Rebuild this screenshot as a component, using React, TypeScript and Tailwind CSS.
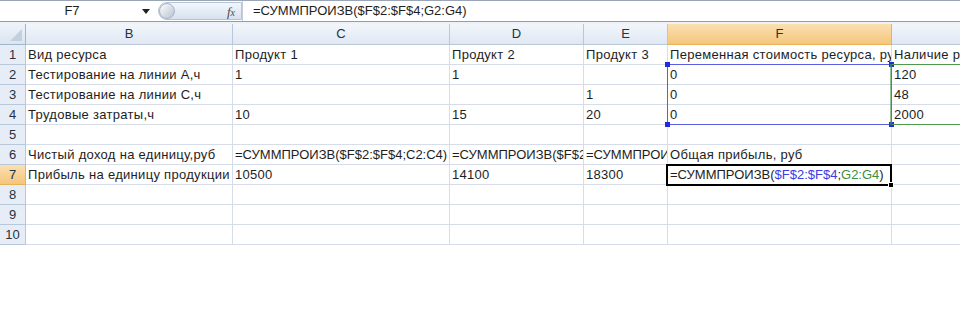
import React from "react";

const template = "26px 207px 217px 134px 84px 224px 200px";
const colNames = ["B", "C", "D", "E", "F", "G"];

type Seg = { t: string; c?: string };
type Cell = string | Seg[] | undefined;

const rows: Cell[][] = [
  ["Вид ресурса", "Продукт 1", "Продукт 2", "Продукт 3", "Переменная стоимость ресурса, руб", "Наличие ресурса"],
  ["Тестирование на линии А,ч", "1", "1", undefined, "0", "120"],
  ["Тестирование на линии С,ч", undefined, undefined, "1", "0", "48"],
  ["Трудовые затраты,ч", "10", "15", "20", "0", "2000"],
  [],
  [
    "Чистый доход на единицу,руб",
    "=СУММПРОИЗВ($F$2:$F$4;C2:C4)",
    "=СУММПРОИЗВ($F$2:$F$4;D2:D4)",
    "=СУММПРОИЗВ($F$2:$F$4;E2:E4)",
    "Общая прибыль, руб",
  ],
  [
    "Прибыль на единицу продукции",
    "10500",
    "14100",
    "18300",
    [
      { t: "=СУММПРОИЗВ(" },
      { t: "$F$2:$F$4", c: "text-[#3c3ce6]" },
      { t: ";" },
      { t: "G2:G4", c: "text-[#3d8f3d]" },
      { t: ")" },
    ],
  ],
  [],
  [],
  [],
];

function renderCell(c: Cell) {
  if (!c) return null;
  if (typeof c === "string") return c;
  return c.map((s, i) => (
    <span key={i} className={s.c}>
      {s.t}
    </span>
  ));
}

function isText(c: Cell) {
  return typeof c === "string" && !c.startsWith("=");
}

const orange = "bg-gradient-to-b from-[#fbe0b1] to-[#f4c67c] border-[#e9b15a]";

export default function App() {
  return (
    <div
      className="w-[960px] h-[322px] bg-white overflow-hidden text-[13px] text-[#1e1e1e]"
      style={{ fontFamily: '"Liberation Sans", Arial, sans-serif' }}
    >
      {/* Formula bar */}
      <div className="h-[22px] flex border-t border-[#9aa5b5] border-b border-b-[#8e9db3] bg-white">
        <div className="w-[158px] flex items-center pr-[8px]">
          <span className="flex-1 text-center pl-[2px]">F7</span>
          <svg width="8" height="5" viewBox="0 0 8 5">
            <path d="M0 0 L8 0 L4 5 Z" fill="#222" />
          </svg>
        </div>
        <div className="w-[84px] my-[1px] rounded-l-full rounded-r-[3px] bg-gradient-to-b from-[#f3f7fc] to-[#d7e1ee] border border-[#b7c4d6] flex items-center justify-between pr-[6px]">
          <div className="w-[16px] h-[16px] rounded-full bg-gradient-to-br from-[#ffffff] to-[#b8c2cf] border border-[#a9b5c5]" />
          <span
            className="italic text-[#4a4a4a] text-[13px] leading-none"
            style={{ fontFamily: '"Liberation Serif", serif' }}
          >
            f<span className="text-[10px]">x</span>
          </span>
        </div>
        <div className="flex-1 flex items-center pl-[10px] border-l border-[#c5cdd9] whitespace-nowrap">
          =СУММПРОИЗВ($F$2:$F$4;G2:G4)
        </div>
      </div>
      <div className="h-[2px] bg-[#eef2f7]" />

      {/* Sheet */}
      <div className="relative">
        <div className="grid" style={{ gridTemplateColumns: template }}>
          {/* header row */}
          <div className="h-[21px] bg-gradient-to-b from-[#eef3fa] to-[#dbe4f0] border-r border-b border-[#9eb6ce] flex items-end justify-end p-[3px]">
            <svg width="12" height="12" viewBox="0 0 12 12">
              <path d="M12 0 L12 12 L0 12 Z" fill="#c3cfdf" />
            </svg>
          </div>
          {colNames.map((n) => (
            <div
              key={n}
              className={
                "h-[21px] flex items-center justify-center border-r border-b text-[#27313f] " +
                (n === "F" ? orange : "bg-gradient-to-b from-[#f2f6fb] to-[#e0e8f3] border-[#b8c8da]")
              }
            >
              {n}
            </div>
          ))}
          {rows.map((r, ri) => (
            <React.Fragment key={ri}>
              <div
                className={
                  "h-[20px] flex items-center justify-center border-r border-b text-[#27313f] " +
                  (ri === 6 ? orange : "bg-[#e6edf7] border-[#b8c8da]")
                }
              >
                {ri + 1}
              </div>
              {colNames.map((_, ci) => (
                <div
                  key={ci}
                  className={
                    "h-[20px] border-r border-b border-[#d7dde8] overflow-hidden whitespace-nowrap flex items-end pl-[2px] pb-[1px] leading-[17px] " +
                    (isText(r[ci]) ? "tracking-[0.3px]" : "")
                  }
                >
                  {renderCell(r[ci])}
                </div>
              ))}
            </React.Fragment>
          ))}
        </div>

        {/* F2:F4 blue range */}
        <div className="absolute left-[667px] top-[40px] w-[225px] h-[61px] border border-[#5a5ee0] pointer-events-none" />
        <div className="absolute left-[665px] top-[38px] w-[5px] h-[5px] bg-[#1f2be0]" />
        <div className="absolute left-[889px] top-[38px] w-[5px] h-[5px] bg-[#1f2be0]" />
        <div className="absolute left-[665px] top-[98px] w-[5px] h-[5px] bg-[#1f2be0]" />
        <div className="absolute left-[889px] top-[98px] w-[5px] h-[5px] bg-[#1f2be0]" />
        {/* G2:G4 green range */}
        <div className="absolute left-[892px] top-[40px] w-[200px] h-[61px] border border-l-0 border-[#4e9a4e] pointer-events-none" />
        <div className="absolute left-[890px] top-[40px] w-[2px] h-[61px] bg-[#4e9a4e] opacity-60" />
        {/* F7 active cell */}
        <div className="absolute left-[666px] top-[140px] w-[226px] h-[22px] border-2 border-black pointer-events-none" />
        <div className="absolute left-[888px] top-[158px] w-[6px] h-[6px] bg-black border border-white" />
      </div>
    </div>
  );
}
